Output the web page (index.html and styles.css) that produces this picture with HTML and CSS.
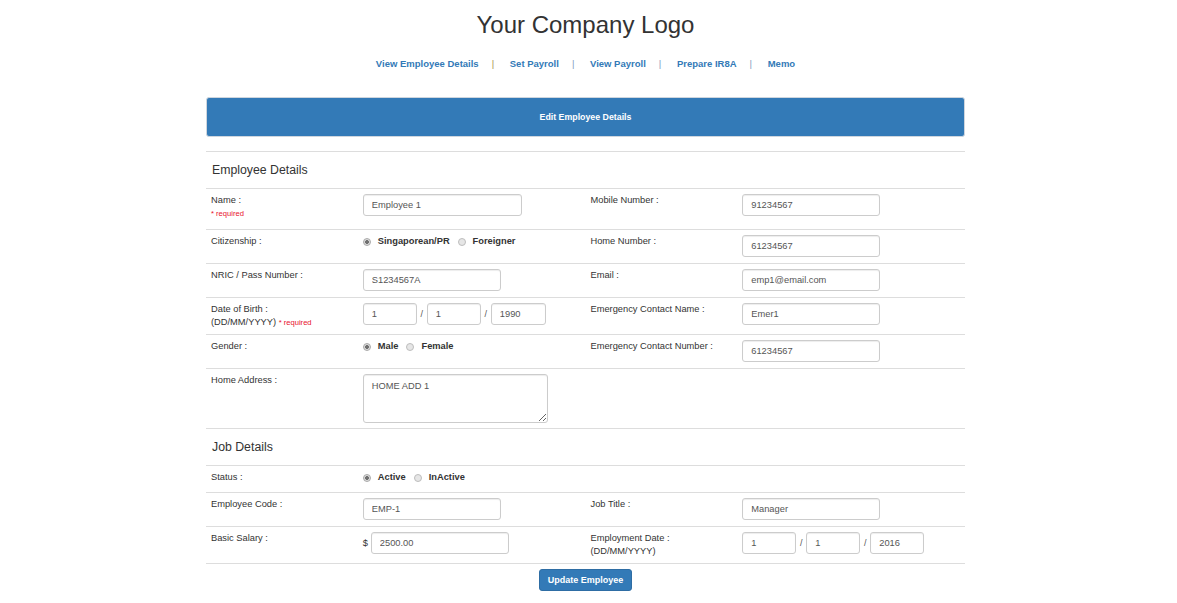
FILE: index.html
```html
<!DOCTYPE html>
<html>
<head>
<meta charset="utf-8">
<title>Edit Employee Details</title>
<link rel="stylesheet" href="styles.css">
</head>
<body>
<header class="top">
  <h1 class="logo">Your Company Logo</h1>
  <nav class="nav">
    <a href="#">View Employee Details</a><span class="sep sep-first">|</span>
    <a href="#">Set Payroll</a><span class="sep">|</span>
    <a href="#">View Payroll</a><span class="sep">|</span>
    <a href="#">Prepare IR8A</a><span class="sep">|</span>
    <a href="#">Memo</a>
  </nav>
</header>

<main class="container">
  <div class="panel-heading">Edit Employee Details</div>

  <form class="form">
    <div class="section">Employee Details</div>

    <div class="row h41">
      <div class="label">Name :<br><span class="req">* required</span></div>
      <div class="cell"><input class="field w159" type="text" value="Employee 1"></div>
      <div class="label">Mobile Number :</div>
      <div class="cell"><input class="field" type="text" value="91234567"></div>
    </div>

    <div class="row h34">
      <div class="label">Citizenship :</div>
      <div class="cell radios">
        <label class="opt"><input class="radio" type="radio" name="cit" checked>Singaporean/PR</label>
        <label class="opt"><input class="radio" type="radio" name="cit">Foreigner</label>
      </div>
      <div class="label">Home Number :</div>
      <div class="cell"><input class="field" type="text" value="61234567"></div>
    </div>

    <div class="row h34">
      <div class="label">NRIC / Pass Number :</div>
      <div class="cell"><input class="field" type="text" value="S1234567A"></div>
      <div class="label">Email :</div>
      <div class="cell"><input class="field" type="text" value="emp1@email.com"></div>
    </div>

    <div class="row h37">
      <div class="label">Date of Birth :<br>(DD/MM/YYYY) <span class="req">* required</span></div>
      <div class="cell date">
        <input class="field w54" type="text" value="1"><span class="slash">/</span><input class="field w54" type="text" value="1"><span class="slash">/</span><input class="field w55" type="text" value="1990">
      </div>
      <div class="label">Emergency Contact Name :</div>
      <div class="cell"><input class="field" type="text" value="Emer1"></div>
    </div>

    <div class="row h34">
      <div class="label">Gender :</div>
      <div class="cell radios">
        <label class="opt"><input class="radio" type="radio" name="gen" checked>Male</label>
        <label class="opt"><input class="radio" type="radio" name="gen">Female</label>
      </div>
      <div class="label">Emergency Contact Number :</div>
      <div class="cell"><input class="field" type="text" value="61234567"></div>
    </div>

    <div class="row h60">
      <div class="label">Home Address :</div>
      <div class="cell"><textarea class="field area">HOME ADD 1</textarea></div>
      <div class="label"></div>
      <div class="cell"></div>
    </div>

    <div class="section">Job Details</div>

    <div class="row h27">
      <div class="label">Status :</div>
      <div class="cell radios">
        <label class="opt"><input class="radio" type="radio" name="st" checked>Active</label>
        <label class="opt"><input class="radio" type="radio" name="st">InActive</label>
      </div>
      <div class="label"></div>
      <div class="cell"></div>
    </div>

    <div class="row h34">
      <div class="label">Employee Code :</div>
      <div class="cell"><input class="field" type="text" value="EMP-1"></div>
      <div class="label">Job Title :</div>
      <div class="cell"><input class="field" type="text" value="Manager"></div>
    </div>

    <div class="row h37 last">
      <div class="label">Basic Salary :</div>
      <div class="cell money"><span class="dollar">$</span><input class="field" type="text" value="2500.00"></div>
      <div class="label">Employment Date :<br>(DD/MM/YYYY)</div>
      <div class="cell date">
        <input class="field w54" type="text" value="1"><span class="slash">/</span><input class="field w54" type="text" value="1"><span class="slash">/</span><input class="field w54" type="text" value="2016">
      </div>
    </div>

    <div class="actions">
      <button class="btn" type="button">Update Employee</button>
    </div>
  </form>
</main>
</body>
</html>
```

FILE: styles.css
```css
* { box-sizing: border-box; }

body {
  margin: 0;
  padding-right: 6px;
  background: #fff;
  color: #333;
  font-family: "Liberation Sans", Arial, Helvetica, sans-serif;
}

.top {
  text-align: center;
  padding-top: 11px;
}

.logo {
  margin: 0;
  font-size: 24px;
  line-height: 27px;
  font-weight: normal;
  color: #333;
}

.nav {
  margin-top: 19px;
  height: 14px;
  line-height: 14px;
  font-size: 9.5px;
  font-weight: bold;
}

.nav a {
  color: #337ab7;
  text-decoration: none;
}

.sep {
  display: inline-block;
  margin: 0 13px;
  color: #7f9cc0;
  font-weight: normal;
}

.sep-first { color: #a89450; }

.container {
  width: 759px;
  margin: 26px auto 0;
}

.panel-heading {
  height: 40px;
  line-height: 38px;
  background: #337ab7;
  border: 1px solid #cfd6de;
  border-radius: 3px;
  color: #fff;
  font-weight: bold;
  font-size: 8.8px;
  text-align: center;
}

.form {
  margin-top: 14px;
}

.section {
  height: 37px;
  border-top: 1px solid #ddd;
  padding-left: 6px;
  line-height: 37px;
  font-size: 12.3px;
  color: #333;
}

.row {
  display: grid;
  grid-template-columns: 20% 30% 20% 30%;
  border-top: 1px solid #ddd;
  font-size: 9.3px;
}

.row.last { border-bottom: 1px solid #ddd; }

.h27 { height: 27px; }
.h34 { height: 34px; }
.h37 { height: 37px; }
.h41 { height: 41px; }
.h60 { height: 60px; }
.row.last.h37 { height: 38px; }

.label {
  padding: 5px 5px 0;
  line-height: 13px;
  color: #333;
}

.req {
  color: #e8112d;
  font-size: 7.6px;
}

.cell {
  padding: 5px 5px 0;
  display: flex;
  align-items: flex-start;
}

.field {
  display: block;
  width: 138px;
  height: 22px;
  margin: 0;
  padding: 0 8px;
  border: 1px solid #ccc;
  border-radius: 3px;
  box-shadow: inset 0 1px 1px rgba(0, 0, 0, 0.075);
  background: #fff;
  color: #555;
  font-family: "Liberation Sans", Arial, Helvetica, sans-serif;
  font-size: 9.3px;
}

.w159 { width: 159px; }
.w54 { width: 54px; }
.w55 { width: 55px; }

.area {
  width: 185px;
  height: 49px;
  padding: 5px 8px;
  resize: vertical;
  line-height: 13px;
}

.slash {
  width: 10px;
  line-height: 22px;
  text-align: center;
  color: #555;
  font-size: 9px;
}

.dollar {
  width: 8px;
  line-height: 22px;
  color: #333;
}

.radios {
  padding-top: 5px;
  line-height: 13px;
  align-items: center;
  height: 18px;
  margin-top: 0;
}

.opt {
  display: inline-flex;
  align-items: center;
  margin-right: 8px;
  font-weight: bold;
  color: #333;
}

.radio {
  appearance: none;
  -webkit-appearance: none;
  width: 8px;
  height: 8px;
  margin: 0 7px 0 0;
  border: 1px solid #bdbdbd;
  border-radius: 50%;
  background: #e6e6e6;
}

.radio:checked {
  background: radial-gradient(circle, #707070 0 1.6px, #dcdcdc 2.2px);
  border-color: #a8a8a8;
}

.actions {
  display: flex;
  justify-content: center;
  padding-top: 5px;
}

.btn {
  height: 22px;
  padding: 0 8px;
  border: 1px solid #2e6da4;
  border-radius: 3px;
  background: #337ab7;
  color: #fff;
  font-family: "Liberation Sans", Arial, Helvetica, sans-serif;
  font-size: 9px;
  font-weight: bold;
}
```
